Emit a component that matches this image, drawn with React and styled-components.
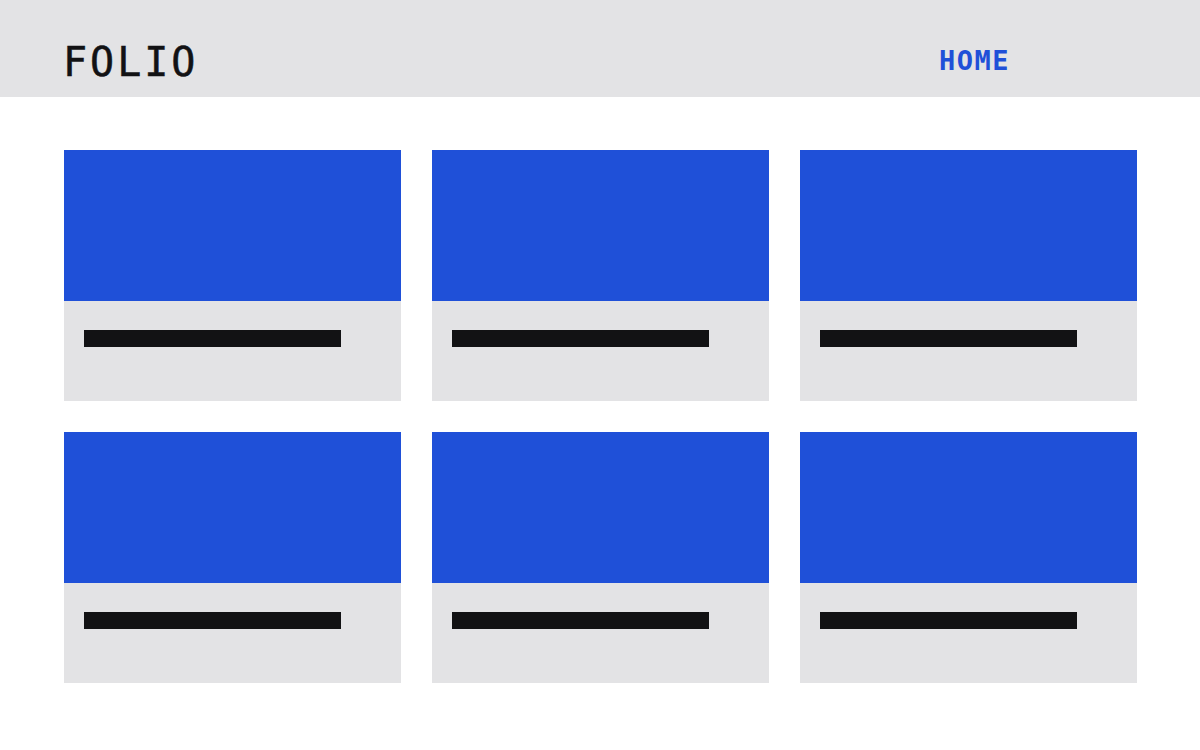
import styled, { createGlobalStyle } from "styled-components";

const GlobalStyle = createGlobalStyle`
    html, body {
        margin: 0;
        padding: 0;
        background: #ffffff;
    }
`;

const Page = styled.div`
    width: 1200px;
    min-height: 750px;
    background: #ffffff;
    font-family: "DejaVu Sans Mono", "Liberation Mono", monospace;
`;

const Header = styled.header`
    height: 97px;
    background: #e3e3e5;
    display: flex;
    align-items: flex-start;
    justify-content: space-between;
    padding: 0 190px 0 63px;
    box-sizing: border-box;
`;

const Logo = styled.div`
    font-size: 40px;
    font-weight: 400;
    letter-spacing: 3px;
    color: #121214;
    line-height: 1;
    margin-top: 42px;
    -webkit-text-stroke: 0.5px #121214;
`;

const NavLink = styled.a`
    font-size: 27px;
    font-weight: 700;
    letter-spacing: 1.5px;
    color: #1f50d8;
    text-decoration: none;
    line-height: 1;
    margin-top: 47px;
    cursor: pointer;
`;

const Grid = styled.main`
    display: grid;
    grid-template-columns: repeat(3, 337px);
    gap: 31px;
    padding: 53px 0 0 64px;
`;

const Card = styled.div`
    height: 251px;
    display: flex;
    flex-direction: column;
    background: #e3e3e5;
`;

const Thumb = styled.div`
    height: 151px;
    background: #1f50d8;
`;

const Caption = styled.div`
    padding: 29px 20px 0;
`;

const TitleBar = styled.div`
    width: ${(p) => p.$w}px;
    height: 17px;
    background: #121214;
`;

const cards = [1, 2, 3, 4, 5, 6];

const App = () => {
    return (
        <Page>
            <GlobalStyle />
            <Header>
                <Logo>FOLIO</Logo>
                <NavLink href="#home">HOME</NavLink>
            </Header>
            <Grid>
                {cards.map((id) => (
                    <Card key={id}>
                        <Thumb />
                        <Caption>
                            <TitleBar $w={257} />
                        </Caption>
                    </Card>
                ))}
            </Grid>
        </Page>
    );
};

export default App;
